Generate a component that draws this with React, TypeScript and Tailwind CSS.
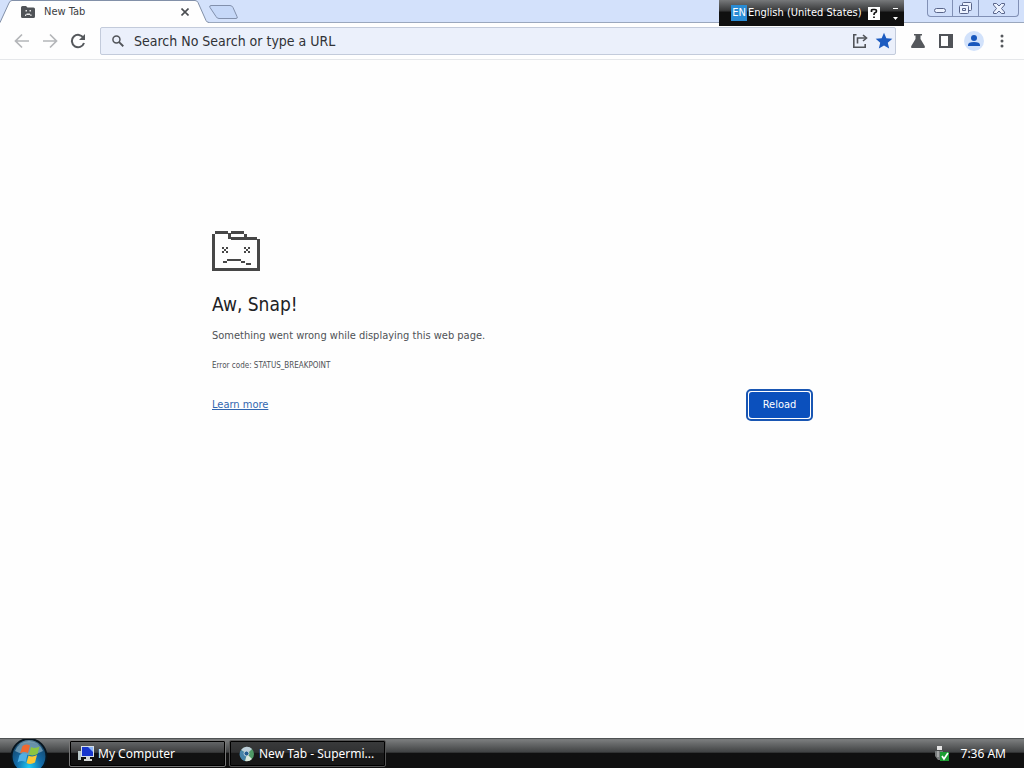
import type { ReactNode } from 'react';
import { MdStar } from 'react-icons/md';

const ui = "font-['DejaVu_Sans_Condensed','DejaVu_Sans',sans-serif]";

function SadFolder({ className }: { className: string }) {
  return (
    <svg viewBox="0 0 48 40" className={className} fill="#474747" aria-hidden="true">
      <path
        shapeRendering="crispEdges"
        d="M3 0h13v2.600H3zM0 3h2.700v37H0zM16 2h3v6h-3zM19 0h13v2.600H19zM32 2.500h3V6h-3zM19 6h26v2.600H19zM45.300 8H48v32h-2.700zM0 37.300h48V40H0z"
      />
      <path
        shapeRendering="crispEdges"
        d="M10 16h2v2h-2zM14 16h2v2h-2zM12 18h2v2h-2zM10 20h2v2h-2zM14 20h2v2h-2zM32 16h2v2h-2zM36 16h2v2h-2zM34 18h2v2h-2zM32 20h2v2h-2zM36 20h2v2h-2z"
      />
      <path shapeRendering="crispEdges" d="M11 30h4v2h-4zM15 28h14v2H15zM29 30h4v2h-4zM34 32h5v2h-5z" />
    </svg>
  );
}

function TabStrip() {
  return (
    <header className="relative flex h-[23px] items-stretch bg-[#d3e1fb]">
      <div className="absolute inset-x-0 bottom-0 border-b border-[#9aa7bd]" />
      <div className="relative flex w-[209px] items-center">
        <svg viewBox="0 0 209 23" className="absolute inset-0 h-full w-full" aria-hidden="true">
          <path d="M0 23 9 3q1-2.500 3-2.500h183q2 0 3 2l8 18q1 2 3 2v.5z" fill="#fefefe" />
          <path d="M0 22.500 9 3q1-2.500 3-2.500h183q2 0 3 2l8 18q1 2 3 2" fill="none" stroke="#8290a8" />
        </svg>
        <div className="relative flex w-full items-center pl-[21px] pr-4">
          <svg viewBox="0 0 14 12" className="h-3 w-[14px]" aria-hidden="true">
            <path d="M0 1.500Q0 0 1.500 0H5l1.500 1.500h6Q14 1.500 14 3v7.500q0 1.500-1.500 1.500h-11Q0 12 0 10.500z" fill="#505357" />
            <path d="M4.500 4h1.500v1.500H4.500zM8.500 4H10v1.500H8.500zM5.500 7.500h3.500v1h1.500v1.500H9.300V9H5.200v1H4V8.500h1.500z" fill="#e6e6e6" />
          </svg>
          <span className={`${ui} ml-[9px] flex-1 text-[11px] leading-4 text-[#3c4043]`}>New Tab</span>
          <button aria-label="Close tab" className="flex h-4 w-4 items-center justify-center">
            <svg viewBox="0 0 8 8" className="h-2 w-2" stroke="#4a4d51" strokeWidth="1.600"><path d="m.5.5 7 7m0-7-7 7" /></svg>
          </button>
        </div>
      </div>
      <button aria-label="New tab" className="flex items-center">
        <svg viewBox="0 0 30 14" className="h-[14px] w-[30px]"><path d="M2 .5h19q2 0 3 2l4 9q1 2-1 2H10q-2 0-3-2L1 2.500Q0 .5 2 .5z" fill="#c6d8f8" stroke="#8290ac" /></svg>
      </button>
      <div className="ml-auto mr-[5px] flex h-[17px] overflow-hidden rounded-b-sm border border-t-0 border-[#8190b5] bg-[#cfdefa]">
        <WindowButton label="Minimize" width="w-6"><path d="M2.500 10.500q0-2 2-2h7q2 0 2 2t-2 2h-7q-2 0-2-2z" /></WindowButton>
        <WindowButton label="Restore" width="w-[26px] border-l border-[#8190b5]">
          <rect x="4.500" y="2.500" width="9" height="8" rx="1" /><rect x="1.500" y="5.500" width="9" height="8" rx="1" /><path d="M4.500 8.500h3v2h-3z" />
        </WindowButton>
        <WindowButton label="Close" width="w-10 border-l border-[#8190b5]"><path d="M2.500 3.500h3L8 6l2.500-2.500h3V5l-3 3.500 3 3.500v1.500h-3L8 11l-2.500 2.500h-3V12l3-3.500-3-3.500z" /></WindowButton>
      </div>
    </header>
  );
}

function WindowButton({ label, width, children }: { label: string; width: string; children: ReactNode }) {
  return (
    <button aria-label={label} className={`flex items-center justify-center ${width}`}>
      <svg viewBox="0 0 16 16" className="h-4 w-4" fill="#edf3ff" stroke="#59658a">{children}</svg>
    </button>
  );
}

function LanguageBar() {
  return (
    <div className={`${ui} absolute right-[120px] top-0 flex h-[26px] w-[185px] items-center bg-linear-to-b from-[#77797b] via-[#3a3b3c] via-40% to-[#101010] to-48% pl-3 text-[11px] text-white`}>
      <span className="flex h-4 w-4 items-center justify-center bg-[#298bd4]">EN</span>
      <span className="ml-px whitespace-nowrap">English (United States)</span>
      <button aria-label="Help" className="ml-auto mr-3">
        <svg viewBox="0 0 12 13" className="h-[13px] w-3">
          <path d="M0 0h12v13H0z" fill="#fff" />
          <path d="M3.500 5V3.500Q3.500 2.500 5 2.500h2q1.500 0 1.500 1.500T6.500 6Q6 6.500 6 8M6 9.500V11" fill="none" stroke="#111" strokeWidth="1.700" />
        </svg>
      </button>
      <button aria-label="Language options" className="mr-[5px]">
        <svg viewBox="0 0 7 13" className="h-[13px] w-[7px]" fill="#fff"><path d="M1 1h5v1H1zM1 10h5l-2.500 3z" /></svg>
      </button>
    </div>
  );
}

function Toolbar() {
  return (
    <nav className="flex h-[37px] items-center border-b border-[#e5e7ea] bg-[#fefefe] pl-2">
      <button aria-label="Back" className="flex h-7 w-7 items-center justify-center">
        <svg viewBox="0 0 16 16" className="h-4 w-4" fill="none" stroke="#b4b6b9" strokeWidth="1.700"><path d="M15 8H2M8 1.500 1.500 8 8 14.500" /></svg>
      </button>
      <button aria-label="Forward" className="flex h-7 w-7 items-center justify-center">
        <svg viewBox="0 0 16 16" className="h-4 w-4" fill="none" stroke="#b4b6b9" strokeWidth="1.700"><path d="M1 8h13M8 1.500 14.500 8 8 14.500" /></svg>
      </button>
      <button aria-label="Reload page" className="flex h-7 w-7 items-center justify-center">
        <svg viewBox="0 0 16 16" className="h-4 w-4" fill="none" stroke="#55585c" strokeWidth="2"><path d="M13.500 5A6.200 6.200 0 1 0 14 10" /><path d="M15 1v6H9z" fill="#55585c" stroke="none" /></svg>
      </button>
      <div className="ml-2 flex h-7 flex-1 items-center rounded-xs border border-[#c3cbdb] bg-[#ebf0fb] pl-[11px] pr-px">
        <svg viewBox="0 0 13 13" className="h-3 w-3" fill="none" stroke="#505358" strokeWidth="1.600" aria-hidden="true"><circle cx="4.800" cy="4.800" r="3.800" /><path d="m7.700 7.700 4.500 4.500" strokeWidth="2" /></svg>
        <input aria-label="Address" placeholder="Search No Search or type a URL" className={`${ui} ml-[10px] min-w-0 flex-1 bg-transparent text-[14px] leading-5 outline-none placeholder:text-[#303236]`} />
        <button aria-label="Share" className="mr-[6px]">
          <svg viewBox="0 0 16 16" className="h-4 w-4" fill="none" stroke="#515459" strokeWidth="1.600"><path d="M4.500 1.800H1.800v12.400h11.400V11M5.500 10.500V5H14" /><path d="m11 2 3.500 3L11 8" /></svg>
        </button>
        <button aria-label="Bookmark this tab"><MdStar className="h-5 w-5 text-[#1c5bc0]" /></button>
      </div>
      <div className="ml-2 mr-2 flex">
        <button aria-label="Experiments" className="flex h-7 w-7 items-center justify-center">
          <svg viewBox="0 0 16 16" className="h-4 w-4" fill="#55585c"><path d="M4 1h8v1.500h-1.500V6l4.200 7q.8 2-1.200 2h-11q-2 0-1.200-2L5.500 6V2.500H4z" /></svg>
        </button>
        <button aria-label="Side panel" className="flex h-7 w-7 items-center justify-center">
          <svg viewBox="0 0 14 14" className="h-[14px] w-[14px]" fill="#505358"><path fillRule="evenodd" d="M0 0h14v14H0zM2 2v10h7V2z" /></svg>
        </button>
        <button aria-label="Profile" className="flex h-7 w-7 items-center justify-center">
          <svg viewBox="0 0 20 20" className="h-5 w-5"><circle cx="10" cy="10" r="10" fill="#d2e2fb" /><circle cx="10" cy="7" r="3" fill="#1857bd" /><path d="M4 15v-1q0-3 6-3t6 3v1z" fill="#1857bd" /></svg>
        </button>
        <button aria-label="Menu" className="flex h-7 w-7 items-center justify-center">
          <svg viewBox="0 0 4 14" className="h-[14px] w-1" fill="#55585c"><circle cx="2" cy="2" r="1.500" /><circle cx="2" cy="7" r="1.500" /><circle cx="2" cy="12" r="1.500" /></svg>
        </button>
      </div>
    </nav>
  );
}

function CrashPage() {
  return (
    <main className={`${ui} flex-1 bg-[#fefefe] px-6 pt-[171px]`}>
      <div className="mx-auto max-w-[600px]">
        <SadFolder className="h-10 w-12" />
        <h1 className="mt-[21px] text-[19px] leading-6 text-[#202124]">Aw, Snap!</h1>
        <p className="mt-3 text-[11px] leading-4 text-[#4f5256]">Something went wrong while displaying this web page.</p>
        <p className="mt-4 text-[8px] leading-3 text-[#4f5256]">Error code: STATUS_BREAKPOINT</p>
        <div className="mt-[17px] flex items-center justify-between">
          <a href="#learn-more" className="text-[11px] leading-[18px] text-[#3267b0] underline">Learn more</a>
          <button className="-mr-px h-8 w-[67px] rounded-[5px] border-2 border-[#1956b3] bg-white p-px text-[11px] text-white">
            <span className="flex h-full items-center justify-center rounded-[3px] bg-[#0b50bd]">Reload</span>
          </button>
        </div>
      </div>
    </main>
  );
}

function StartOrb() {
  return (
    <svg viewBox="0 0 38 38" className="h-[38px] w-[38px]" aria-hidden="true">
      <defs>
        <radialGradient id="orb" cx=".5" cy=".8" r=".8"><stop offset="0" stopColor="#20cbf5" /><stop offset=".45" stopColor="#136ba8" /><stop offset=".85" stopColor="#15496e" /><stop offset="1" stopColor="#799aaa" /></radialGradient>
      </defs>
      <circle cx="19" cy="17.500" r="17.500" fill="url(#orb)" stroke="#07151f" strokeWidth="2" />
      <path d="M5 12Q9 2 19 2t14 10q-8 4-14 4T5 12z" fill="#b9d6df" opacity=".5" />
      <path d="M12.500 7q4-2.500 7.500-.5l-2 7.500q-4-2-8 .5z" fill="#ee6930" />
      <path d="M21 8q4 2 8.500-.5l-2 7.500q-4.500 2.500-8.500.5z" fill="#8dc540" />
      <path d="M9.500 16q4-2.500 8-.5l-2 7.500q-4-2-8 .5z" fill="#4eafe5" />
      <path d="M18.500 16.500q4 2 8.500-.5l-2 7.500q-4.500 2.500-8.500.5z" fill="#fcc735" />
    </svg>
  );
}

function Taskbar() {
  return (
    <footer className="flex h-[30px] items-center border-t border-[#4f5253] bg-linear-to-b from-[#77797a] from-5% via-[#414344] via-45% to-[#101010] to-50% font-['Noto_Sans',sans-serif] text-[12px] text-white">
      <button aria-label="Start" className="ml-[10px] flex h-[29px] w-[38px] items-start overflow-hidden"><StartOrb /></button>
      <button className="ml-[21px] flex h-[27px] w-[157px] items-center rounded-xs border border-[#777] bg-linear-to-b from-[#66686a] via-[#3d3e3f] via-45% to-[#111] to-50% pl-2 ring-1 ring-black ring-inset">
        <svg viewBox="0 0 16 16" className="mr-1 h-4 w-4" aria-hidden="true"><path d="M0 5h3v9H0z" fill="#b9c7c8" /><path d="M3 0h13v11H3z" fill="#d7dfe8" /><path d="M4 1h11v9H4z" fill="#1736cc" /><path d="M10 1h5v5z" fill="#8bb4fa" /><path d="M8 11h4v2h2v2H6v-2h2z" fill="#d6d9d8" /></svg>
        My Computer
      </button>
      <button className="ml-[3px] flex h-[27px] w-[157px] items-center rounded-xs border border-[#555] bg-linear-to-b from-[#3a3b3c] via-[#303132] via-45% to-[#181818] to-50% pl-[9px] ring-1 ring-black ring-inset">
        <svg viewBox="0 0 16 16" className="mr-1 h-4 w-4" aria-hidden="true"><circle cx="8" cy="8" r="7" fill="#4f9a66" /><path d="M8 8 2 4a7 7 0 0 1 11-1z" fill="#bdced9" /><path d="M8 8 2 4a7 7 0 0 0 4 11z" fill="#4683a9" /><path d="m8 8-2 7a7 7 0 0 0 7-2z" fill="#dce9dd" /><circle cx="7.500" cy="7.500" r="2.500" fill="#245c91" stroke="#c2d3da" /></svg>
        New Tab - Supermi...
      </button>
      <div className="ml-auto mr-[18px] flex items-center">
        <svg viewBox="0 0 16 16" className="mr-[11px] h-4 w-4" aria-hidden="true"><path d="M3 0h5v4H3z" fill="#e4e4e4" /><path d="M1 5h8v5l-2 4H4l-3-4z" fill="#777b7b" /><path d="M3 5h2v6H3z" fill="#a5a8a8" /><path d="M6 6h9v9H6z" fill="#1b9d32" /><path d="m8 10 2 3 4-6" stroke="#fff" strokeWidth="1.700" fill="none" /></svg>
        <time>7:36 AM</time>
      </div>
    </footer>
  );
}

export default function App() {
  return (
    <div className="relative flex min-h-screen flex-col">
      <TabStrip />
      <Toolbar />
      <CrashPage />
      <Taskbar />
      <LanguageBar />
    </div>
  );
}
